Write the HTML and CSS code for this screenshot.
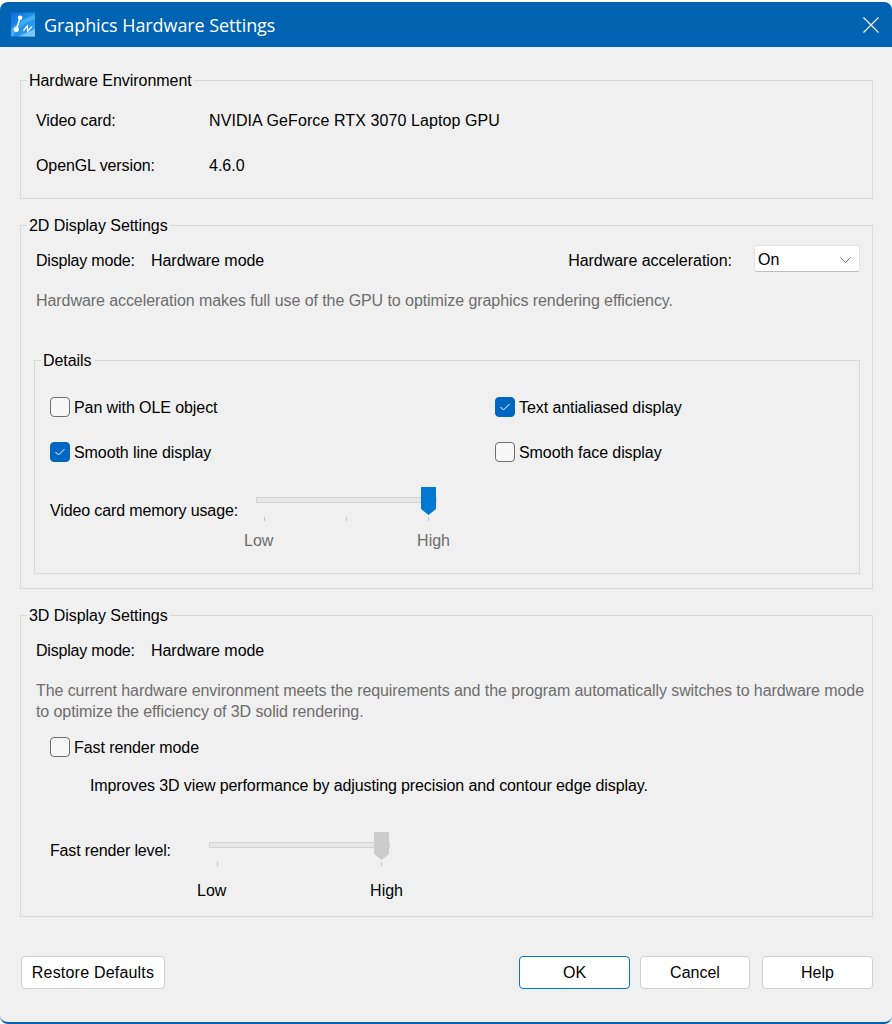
FILE: index.html
```html
<!DOCTYPE html>
<html lang="en">
<head>
    <meta charset="UTF-8">
    <title>Graphics Hardware Settings</title>
    <link rel="stylesheet" href="styles.css">
</head>
<body>
    <div class="window">
        <div class="titlebar">
            <svg class="app-icon" width="24" height="25" viewBox="0 0 25 25">
                <defs>
                    <linearGradient id="icon-bg" x1="0" y1="0" x2="1" y2="1">
                        <stop offset="0" stop-color="#0f6fdc"/>
                        <stop offset="0.5" stop-color="#1f8fee"/>
                        <stop offset="1" stop-color="#3fa9f2"/>
                    </linearGradient>
                </defs>
                <rect width="25" height="25" fill="url(#icon-bg)"/>
                <path d="M0 17 C7 11 15 5 25 2 V7 C15 10 7 16 2 25 H0 Z" fill="#6fd0f8" opacity="0.45"/>
                <path d="M8 25 C13 22 19 21 25 17 V25 Z" fill="#a8e2fa" opacity="0.6"/>
                <path d="M9.5 5.5 L5.5 17.5" stroke="#fff" stroke-width="1.5" fill="none"/>
                <path d="M13 19 L17 14 L17.5 19.5 L22 14.5" stroke="#fff" stroke-width="1.3" fill="none"/>
                <circle cx="9.5" cy="5.5" r="2.4" fill="#fff"/>
                <circle cx="5.5" cy="17.5" r="2.7" fill="#fff"/>
            </svg>
            <span class="title">Graphics Hardware Settings</span>
            <svg class="close" width="16" height="16" viewBox="0 0 16 16">
                <path d="M0.5 0.5 L15.5 15.5 M15.5 0.5 L0.5 15.5" stroke="#fff" stroke-width="1.1"/>
            </svg>
        </div>

        <div class="content">
            <fieldset class="group env">
                <legend>Hardware Environment</legend>
                <div class="row"><span class="key-wide">Video card:</span><span class="card-name">NVIDIA GeForce RTX 3070 Laptop GPU</span></div>
                <div class="row"><span class="key-wide">OpenGL version:</span><span>4.6.0</span></div>
            </fieldset>

            <fieldset class="group display-2d">
                <legend>2D Display Settings</legend>
                <div class="row">
                    <span class="key">Display mode:</span><span class="mode">Hardware mode</span>
                    <span class="accel-label">Hardware acceleration:</span>
                    <div class="combo">
                        <span>On</span>
                        <svg width="11" height="6" viewBox="0 0 11 6"><path d="M0.5 0.5 L5.5 5.5 L10.5 0.5" fill="none" stroke="#666" stroke-width="1"/></svg>
                    </div>
                </div>
                <div class="row hint">Hardware acceleration makes full use of the GPU to optimize graphics rendering efficiency.</div>

                <fieldset class="group details">
                    <legend>Details</legend>
                    <div class="check-grid">
                        <label class="check"><span class="box"></span><span class="check-text">Pan with OLE object</span></label>
                        <label class="check"><span class="box checked"><svg width="10" height="8" viewBox="0 0 10 8"><path d="M0.5 4 L3.5 7 L9.5 1" fill="none" stroke="#fff" stroke-width="1"/></svg></span><span class="check-text">Text antialiased display</span></label>
                        <label class="check"><span class="box checked"><svg width="10" height="8" viewBox="0 0 10 8"><path d="M0.5 4 L3.5 7 L9.5 1" fill="none" stroke="#fff" stroke-width="1"/></svg></span><span class="check-text">Smooth line display</span></label>
                        <label class="check"><span class="box"></span><span class="check-text">Smooth face display</span></label>
                    </div>
                    <div class="slider-row memory">
                        <span class="slider-label">Video card memory usage:</span>
                        <div class="slider">
                            <div class="track"></div>
                            <svg class="thumb" width="15" height="28" viewBox="0 0 15 28"><path d="M0 0 H15 V22 L7.5 28 L0 22 Z" fill="#0078d4"/></svg>
                            <div class="ticks"><i></i><i></i><i></i></div>
                            <div class="slider-labels muted"><span>Low</span><span>High</span></div>
                        </div>
                    </div>
                </fieldset>
            </fieldset>

            <fieldset class="group display-3d">
                <legend>3D Display Settings</legend>
                <div class="row"><span class="key">Display mode:</span><span class="mode">Hardware mode</span></div>
                <div class="hint hint-block">The current hardware environment meets the requirements and the program automatically switches to hardware mode<br>to optimize the efficiency of 3D solid rendering.</div>
                <label class="check fast"><span class="box"></span><span class="check-text">Fast render mode</span></label>
                <div class="row improve">Improves 3D view performance by adjusting precision and contour edge display.</div>
                <div class="slider-row level">
                    <span class="slider-label">Fast render level:</span>
                    <div class="slider">
                        <div class="track"></div>
                        <svg class="thumb" width="15" height="28" viewBox="0 0 15 28"><path d="M0 0 H15 V22 L7.5 28 L0 22 Z" fill="#cccccc"/></svg>
                        <div class="ticks"><i></i><i></i></div>
                        <div class="slider-labels wide"><span>Low</span><span>High</span></div>
                    </div>
                </div>
            </fieldset>

            <div class="buttons">
                <button class="btn restore">Restore Defaults</button>
                <button class="btn primary">OK</button>
                <button class="btn cancel">Cancel</button>
                <button class="btn help">Help</button>
            </div>
        </div>
    </div>
</body>
</html>
```

FILE: styles.css
```css
* {
    box-sizing: border-box;
    margin: 0;
    padding: 0;
}

body {
    background-color: #fff;
    font-family: "Liberation Sans", Arial, sans-serif;
    font-size: 16px;
    color: #000;
    padding-top: 2px;
}

.window {
    height: 1022px;
    background-color: #f0f0f0;
    border-bottom: 2px solid #0063b1;
    border-radius: 8px;
    overflow: hidden;
}

.titlebar {
    height: 45px;
    background-color: #0063b1;
    display: flex;
    align-items: center;
    padding: 0 13px 0 11px;
}

.app-icon {
    margin-right: 9px;
}

.title {
    font-family: "Open Sans", sans-serif;
    font-size: 18px;
    letter-spacing: -0.08px;
    color: #fff;
    flex: 1;
}

.close {
    margin-top: 1px;
}

.content {
    padding: 24px 19px 0 20px;
}

.group {
    border: 1px solid #d9d9d9;
    padding: 0 12px 0 15px;
    min-width: 0;
}

/* line-height over the box height drops the text 1px without moving the border */
.group legend {
    height: 18px;
    line-height: 20px;
    padding: 0 2px;
    margin-left: -9px;
    letter-spacing: -0.05px;
}

.env {
    height: 128px;
    padding-top: 16px;
}

.display-2d {
    margin-top: 17px;
    padding-top: 11px;
    padding-bottom: 14px;
}

.display-3d {
    margin-top: 17px;
    padding-top: 11px;
    padding-bottom: 16px;
}

.row {
    height: 30px;
    padding-top: 2px;
    display: flex;
    align-items: center;
}

.row + .row {
    margin-top: 15px;
}

.display-2d .row + .row {
    margin-top: 10px;
}

.key-wide {
    width: 173px;
    letter-spacing: -0.1px;
}

.card-name {
    letter-spacing: 0.09px;
}

.key {
    width: 115px;
    letter-spacing: -0.2px;
}

.mode {
    letter-spacing: -0.05px;
}

.accel-label {
    margin-left: auto;
    margin-right: 22px;
    letter-spacing: -0.03px;
}

.combo {
    width: 106px;
    height: 27px;
    align-self: flex-start;
    margin-top: -2px;
    background-color: #fff;
    border: 1px solid #e3e3e3;
    border-bottom-color: #bdbdbd;
    border-radius: 3px;
    display: flex;
    align-items: center;
    justify-content: space-between;
    padding: 2px 8px 0 3px;
}

.hint {
    color: #6d6d6d;
    letter-spacing: -0.07px;
}

.hint-block {
    margin-top: 15px;
    line-height: 21px;
    white-space: nowrap;
    letter-spacing: -0.08px;
}

.details {
    margin: 36px 0 0 -2px;
    padding: 23px 15px 23px 15px;
}

.check-grid {
    display: grid;
    grid-template-columns: 445px 1fr;
    row-gap: 15px;
}

.check {
    height: 30px;
    display: flex;
    align-items: center;
}

.check-text {
    padding-top: 2px;
    letter-spacing: -0.08px;
}

.box {
    width: 20px;
    height: 20px;
    margin-right: 4px;
    background-color: #f7f7f7;
    border: 1px solid #6e6e6e;
    border-radius: 4px;
    display: flex;
    align-items: center;
    justify-content: center;
}

.box.checked {
    background-color: #0067c0;
    border-color: #0067c0;
}

.fast {
    margin: 10px 0 0 14px;
}

.improve {
    margin: 8px 0 0 54px;
    letter-spacing: -0.11px;
}

.slider-row {
    display: flex;
    align-items: flex-start;
}

.memory {
    margin-top: 20px;
}

.memory .slider-label {
    width: 206px;
    margin-top: 15px;
    letter-spacing: -0.12px;
}

.level {
    margin: 32px 0 0 14px;
}

.level .slider-label {
    width: 159px;
    margin-top: 10px;
    letter-spacing: -0.15px;
}

.slider {
    width: 181px;
    position: relative;
    padding-top: 10px;
}

.track {
    height: 6px;
    background-color: #e6e7e7;
    border: 1px solid #d3d3d3;
}

.thumb {
    position: absolute;
    top: 0;
    left: 165px;
}

.ticks {
    display: flex;
    justify-content: space-between;
    margin: 14px 8px 0 8px;
}

.ticks i {
    display: block;
    width: 1px;
    height: 4px;
    background-color: #c4c4c4;
}

.slider-labels {
    display: flex;
    justify-content: space-between;
    line-height: 18px;
    margin: 11px -13px 0 -12px;
}

.slider-labels.wide {
    margin-top: 16px;
}

.muted {
    color: #6d6d6d;
}

.buttons {
    display: flex;
    margin-top: 39px;
}

.btn {
    height: 33px;
    font-family: inherit;
    font-size: 16px;
    color: #000;
    background-color: #fff;
    border: 1px solid #cfcfcf;
    border-radius: 4px;
    text-align: center;
}

.restore {
    width: 144px;
    margin-left: 1px;
    margin-right: auto;
    letter-spacing: 0.2px;
}

.primary {
    width: 111px;
    border-color: #0078d4;
}

.cancel {
    width: 110px;
    margin-left: 10px;
}

.help {
    width: 111px;
    margin-left: 12px;
}
```
